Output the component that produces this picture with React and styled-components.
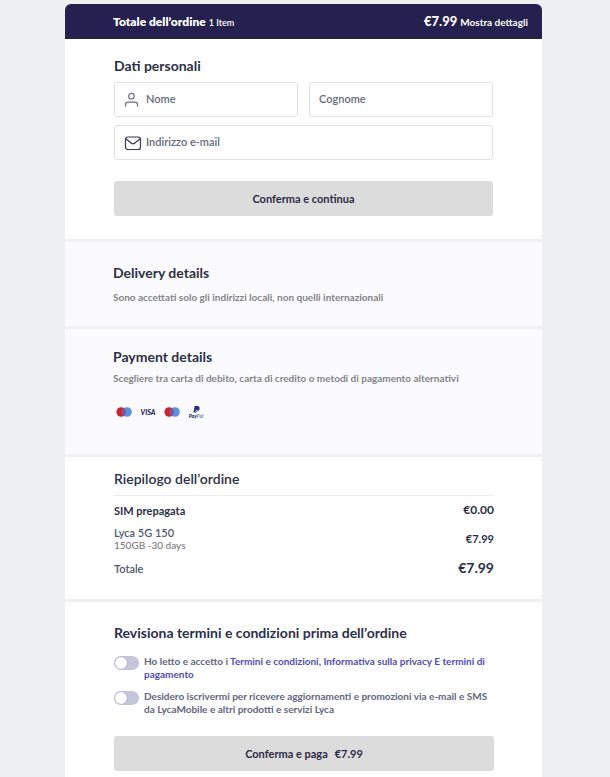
import React, { useState } from 'react';
import styled, { createGlobalStyle } from 'styled-components';

const GlobalStyle = createGlobalStyle`
  * {
    box-sizing: border-box;
  }
  body {
    margin: 0;
    background: #eff0f2;
    color: #2d2f45;
    font-family: Lato, 'Liberation Sans', sans-serif;
    font-size: 11px;
    line-height: 13px;
  }
`

const Page = styled.main`
  padding: 4px 68px 0 65px;
`

const Card = styled.div`
  display: flex;
  flex-direction: column;
  gap: 3px;
  border-radius: 6px 6px 0 0;
  overflow: hidden;
`

const Header = styled.header`
  display: flex;
  align-items: center;
  justify-content: space-between;
  height: 35px;
  margin-bottom: -3px;
  padding: 0 14px 0 48px;
  background: #25204d;
  color: #fff;
`

const HeaderGroup = styled.div`
  display: flex;
  align-items: baseline;
  gap: 3px;
`

const HeaderTitle = styled.h1`
  margin: 0;
  font-size: 12px;
  font-weight: 800;
`

const HeaderPrice = styled.strong`
  font-size: 13px;
  font-weight: 900;
`

const HeaderCount = styled.span`
  font-size: 9px;
  font-weight: 600;
`

const DetailsButton = styled.button`
  padding: 0;
  border: 0;
  background: none;
  color: inherit;
  font: inherit;
  font-size: 10px;
  font-weight: 700;
  cursor: pointer;
`

const Section = styled.section`
  padding: ${props => props.$pad};
  background: ${props => (props.$muted ? '#fbfbfd' : '#fff')};
`

const Heading = styled.h2`
  margin: 0;
  font-size: 14px;
  font-weight: ${props => (props.$light ? 600 : 700)};
  line-height: 18px;
`

const Note = styled.p`
  margin: ${props => props.$gap}px 0 0;
  color: #838388;
  font-size: 10px;
  font-weight: 700;
  line-height: 14px;
`

const Fields = styled.div`
  display: grid;
  grid-template-columns: 1fr 1fr;
  gap: 8px 11px;
  margin-top: 7px;
`

const Field = styled.label`
  display: flex;
  align-items: center;
  gap: 4px;
  height: 35px;
  padding: 0 9px;
  grid-column: ${props => (props.$wide ? '1 / -1' : 'auto')};
  border: 1px solid #e1e2e8;
  border-radius: 3px;
  background: #fff;
`

const FieldIcon = styled.svg`
  flex: none;
  width: 18px;
  height: 18px;
  fill: none;
  stroke: ${props => props.color};
  stroke-width: 1.2;
  stroke-linecap: round;
  stroke-linejoin: round;
`

const TextInput = styled.input`
  flex: 1;
  min-width: 0;
  padding: 0 0 2px;
  border: 0;
  outline: 0;
  background: none;
  color: #2d2f45;
  font: inherit;
  font-weight: 600;
  &::placeholder {
    color: #666b78;
    opacity: 1;
  }
`

const SubmitButton = styled.button`
  display: flex;
  align-items: center;
  justify-content: center;
  gap: 7px;
  width: 100%;
  height: 35px;
  margin-top: ${props => props.$gap}px;
  padding: 0;
  border: 0;
  border-radius: 3px;
  background: #dcdcdc;
  color: #2d2a45;
  font: inherit;
  font-weight: 700;
`

const Methods = styled.div`
  display: flex;
  gap: 8px;
  margin-top: 20px;
  padding-left: 3px;
`

const MethodLogo = styled.svg`
  width: 16px;
  height: 14px;
`

const Summary = styled.table`
  width: 100%;
  margin-top: 7px;
  border-top: 1px solid #ecedf0;
  border-collapse: separate;
  border-spacing: 0 6px;
`

const ItemCell = styled.th`
  padding: 0 0 2px;
  color: ${props => (props.$strong ? '#2d2f45' : '#555a6c')};
  font-weight: ${props => (props.$strong ? 700 : 600)};
  text-align: left;
`

const ItemInfo = styled.span`
  display: block;
  color: #7b7b80;
  font-size: 10px;
  font-weight: 500;
`

const PriceCell = styled.td`
  padding: 0 0 3px;
  font-size: ${props => props.$size}px;
  font-weight: 700;
  line-height: 15px;
  text-align: right;
`

const Consent = styled.div`
  display: flex;
  align-items: flex-start;
  gap: 5px;
  margin-top: ${props => props.$gap}px;
  color: #63667a;
  font-size: 10px;
  font-weight: 700;
`

const Toggle = styled.input`
  flex: none;
  display: flex;
  appearance: none;
  width: 25px;
  height: 14px;
  margin: 1px 0 0;
  padding: 1px;
  border-radius: 7px;
  background: ${props => (props.checked ? '#4640a8' : '#c3c5d8')};
  &::before {
    content: '';
    width: 12px;
    height: 12px;
    margin-left: ${props => (props.checked ? '11px' : 0)};
    border-radius: 50%;
    background: #fff;
    box-shadow: 0 0 1px #777b90;
  }
`

const Link = styled.a`
  color: #504cb8;
  text-decoration: none;
`

const UserIcon = () => (
  <FieldIcon viewBox="0 0 18 18" color="#6c7080" aria-hidden="true">
    <circle cx="7.5" cy="5.2" r="2.8" />
    <path d="M1.5 15.2v-1.4c0-1.7 1.1-2.6 2.6-2.6h6.8c1.5 0 2.6.9 2.6 2.6v1.4" />
  </FieldIcon>
)

const MailIcon = () => (
  <FieldIcon viewBox="0 0 18 18" color="#37384e" aria-hidden="true">
    <rect x="1.5" y="3" width="15" height="12.5" rx="2.6" />
    <path d="M2.2 5l5.3 4.3c.9.7 2.1.7 3 0L15.800 5" />
  </FieldIcon>
)

const CirclesLogo = ({ label }) => (
  <MethodLogo viewBox="0 0 16 14" role="img" aria-label={label}>
    <circle cx="5.2" cy="7" r="4.8" fill="#ce2630" />
    <circle cx="11" cy="7" r="4.8" fill="#5c8fdc" />
    <path d="M8.1 3.2a4.8 4.8 0 0 1 0 7.6a4.8 4.8 0 0 1 0-7.6" fill="#6f5aa6" />
  </MethodLogo>
)

const VisaLogo = () => (
  <MethodLogo viewBox="0 0 16 14" role="img" aria-label="Visa">
    <text x="8" y="9.5" fill="#25256f" fontSize="7" fontWeight="900" fontStyle="italic" textAnchor="middle">VISA</text>
  </MethodLogo>
)

const PaypalLogo = () => (
  <MethodLogo viewBox="0 0 16 14" role="img" aria-label="PayPal">
    <path d="M6.7 1h2.7c1.6 0 2.3.9 2 2.3-.3 1.5-1.3 2.2-2.7 2.2H7.5L7.1 7.2H5.4z" fill="#2c2c82" />
    <path d="M11.3 2.6c.6.5.6 1.2.4 2-.3 1.2-1.2 1.8-2.4 1.8h-.8L8.2 8H6.9l.3-1.6 1.6-.6c1.5-.2 2.4-1.2 2.5-3.2" fill="#6670b8" />
    <text x="8" y="12.5" fill="#25256f" fontSize="5" fontWeight="900" fontStyle="italic" textAnchor="middle">
      Pay<tspan fill="#7d8bc8">Pal</tspan>
    </text>
  </MethodLogo>
)

export default function App() {
  const [terms, setTerms] = useState(false);
  const [news, setNews] = useState(false);

  return (
    <Page>
      <GlobalStyle />
      <Card>
        <Header>
          <HeaderGroup>
            <HeaderTitle>Totale dell’ordine</HeaderTitle>
            <HeaderCount>1 Item</HeaderCount>
          </HeaderGroup>
          <HeaderGroup>
            <HeaderPrice>€7.99</HeaderPrice>
            <DetailsButton type="button">Mostra dettagli</DetailsButton>
          </HeaderGroup>
        </Header>

        <Section $pad="18px 49px 23px">
          <Heading>Dati personali</Heading>
          <Fields>
            <Field>
              <UserIcon />
              <TextInput type="text" placeholder="Nome" aria-label="Nome" />
            </Field>
            <Field>
              <TextInput type="text" placeholder="Cognome" aria-label="Cognome" />
            </Field>
            <Field $wide>
              <MailIcon />
              <TextInput type="email" placeholder="Indirizzo e-mail" aria-label="Indirizzo e-mail" />
            </Field>
          </Fields>
          <SubmitButton type="button" $gap={21}>Conferma e continua</SubmitButton>
        </Section>

        <Section $muted $pad="22px 48px">
          <Heading>Delivery details</Heading>
          <Note $gap={8}>Sono accettati solo gli indirizzi locali, non quelli internazionali</Note>
        </Section>

        <Section $muted $pad="19px 48px 35px">
          <Heading>Payment details</Heading>
          <Note $gap={5}>Scegliere tra carta di debito, carta di credito o metodi di pagamento alternativi</Note>
          <Methods>
            <CirclesLogo label="Mastercard" />
            <VisaLogo />
            <CirclesLogo label="Maestro" />
            <PaypalLogo />
          </Methods>
        </Section>

        <Section $pad="13px 48px 15px 49px">
          <Heading $light>Riepilogo dell’ordine</Heading>
          <Summary>
            <tbody>
              <tr>
                <ItemCell scope="row" $strong>SIM prepagata</ItemCell>
                <PriceCell $size={12}>€0.00</PriceCell>
              </tr>
              <tr>
                <ItemCell scope="row">
                  Lyca 5G 150
                  <ItemInfo>150GB -30 days</ItemInfo>
                </ItemCell>
                <PriceCell $size={11}>€7.99</PriceCell>
              </tr>
              <tr>
                <ItemCell scope="row">Totale</ItemCell>
                <PriceCell $size={14}>€7.99</PriceCell>
              </tr>
            </tbody>
          </Summary>
        </Section>

        <Section $pad="22px 48px 6px 49px">
          <Heading>Revisiona termini e condizioni prima dell’ordine</Heading>
          <Consent $gap={13}>
            <Toggle id="terms" type="checkbox" checked={terms} onChange={e => setTerms(e.target.checked)} />
            <label htmlFor="terms">
              Ho letto e accetto i <Link href="#termini">Termini e condizioni, Informativa sulla privacy E termini di pagamento</Link>
            </label>
          </Consent>
          <Consent $gap={9}>
            <Toggle id="news" type="checkbox" checked={news} onChange={e => setNews(e.target.checked)} />
            <label htmlFor="news">
              Desidero iscrivermi per ricevere aggiornamenti e promozioni via e-mail e SMS da LycaMobile e altri prodotti e servizi Lyca
            </label>
          </Consent>
          <SubmitButton type="button" $gap={20}>
            Conferma e paga <span>€7.99</span>
          </SubmitButton>
        </Section>
      </Card>
    </Page>
  );
}
